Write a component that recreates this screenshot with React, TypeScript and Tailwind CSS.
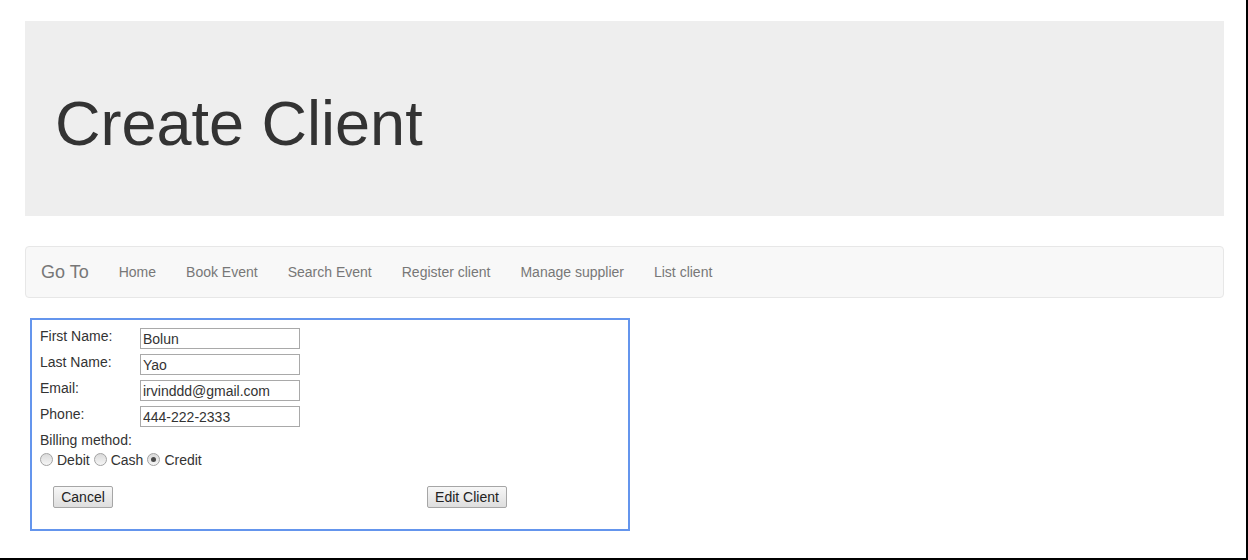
const navLinks = ["Home", "Book Event", "Search Event", "Register client", "Manage supplier", "List client"];

const fields = [
  { label: "First Name:", value: "Bolun" },
  { label: "Last Name:", value: "Yao" },
  { label: "Email:", value: "irvinddd@gmail.com" },
  { label: "Phone:", value: "444-222-2333" },
];

function Radio({ checked }: { checked?: boolean }) {
  return (
    <span className="mt-[3px] flex h-[13px] w-[13px] shrink-0 items-center justify-center rounded-full border border-[#a3a3a3] bg-[linear-gradient(#dadada,#f6f6f6)]">
      {checked && <span className="h-[5px] w-[5px] rounded-full bg-[#4a4a4a]" />}
    </span>
  );
}

function Button({ children, className }: { children: React.ReactNode; className?: string }) {
  return (
    <button
      type="button"
      className={`h-[22px] rounded-[2px] border border-[#a6a6a6] bg-[linear-gradient(#f7f7f7,#dedede)] px-[7px] text-[14px] leading-[20px] text-[#222] ${className ?? ""}`}
    >
      {children}
    </button>
  );
}

export default function App() {
  return (
    <div className="h-[560px] w-[1248px] overflow-hidden border-r-2 border-b-2 border-black bg-white font-['Liberation_Sans',Arial,sans-serif] text-[14px] leading-[20px] text-[#333]">
      <div className="pl-[25px] pt-[21px]">
        <div className="h-[195px] w-[1199px] bg-[#eee] pl-[30px] pt-[68px]">
          <h1 className="text-[63px] leading-[1.1] text-[#333]">Create Client</h1>
        </div>

        <nav className="mt-[30px] flex h-[52px] w-[1199px] items-center rounded-[4px] border border-[#e7e7e7] bg-[#f8f8f8]">
          <a href="#" className="px-[15px] text-[18px] leading-[20px] text-[#777]">
            Go To
          </a>
          {navLinks.map((l) => (
            <a key={l} href="#" className="px-[15px] py-[15px] text-[14px] leading-[20px] text-[#777]">
              {l}
            </a>
          ))}
        </nav>
      </div>

      <form className="ml-[30px] mt-[20px] h-[213px] w-[600px] border-2 border-[#6495ed] pl-[8px] pt-[6px]">
        {fields.map((f) => (
          <div key={f.label} className="flex h-[26px]">
            <span className="w-[100px]">{f.label}</span>
            <input
              readOnly
              value={f.value}
              className="mt-[2px] h-[21px] w-[160px] border border-[#a9a9a9] bg-white pl-[2px] text-[14px] text-[#333] outline-none"
            />
          </div>
        ))}
        <div className="h-[20px]">Billing method:</div>
        <div className="flex h-[20px] gap-[4px]">
          <Radio />
          <span>Debit</span>
          <Radio />
          <span>Cash</span>
          <Radio checked />
          <span>Credit</span>
        </div>
        <div className="mt-[16px] flex">
          <Button className="ml-[13px] w-[60px]">Cancel</Button>
          <Button className="ml-[314px] w-[80px]">Edit Client</Button>
        </div>
      </form>
    </div>
  );
}
